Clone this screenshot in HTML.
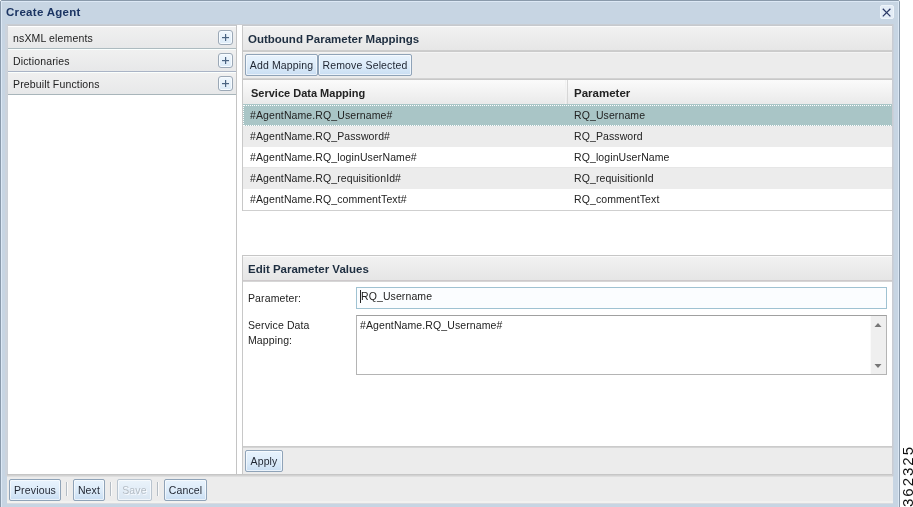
<!DOCTYPE html>
<html><head><meta charset="utf-8">
<style>
*{box-sizing:border-box}
html,body{margin:0;padding:0;width:913px;height:507px;overflow:hidden;background:#fff;font-family:"Liberation Sans",sans-serif;color:#222}
div,span,svg{position:absolute}
#root{left:0;top:0;width:913px;height:507px;will-change:transform}
.t{white-space:nowrap;line-height:12px}
.ln{height:1px}
#dlg{left:0;top:0;width:900px;height:530px;border:1px solid #8a9aab;background:#c7d5e3;border-radius:2px 2px 0 0}
#dlg:before{content:"";position:absolute;left:0;top:0;right:0;bottom:0;border:1px solid #dce8f5}
#title{left:6px;top:6px;font-size:11.5px;font-weight:bold;color:#1c3563;letter-spacing:0.3px}
#close{left:880px;top:5px;width:14px;height:14px;border:1px solid #eef4fa;border-radius:2px;background:#e3ecf6}
/* accordion */
.acc{left:8px;width:228px;height:22px;background:linear-gradient(#f0f0f0,#e7e8e9)}
.acct{left:13px;font-size:10.5px;color:#222;letter-spacing:0.15px}
.plus{left:218px;width:15px;height:15px;border:1px solid #9ba8b6;border-radius:3px;background:linear-gradient(#f0f7fd,#dcebf8);box-shadow:inset 0 0 0 1px #f6fbff}
.plus:before{content:"";position:absolute;left:3px;top:6px;width:7px;height:1px;background:#4a6482;box-shadow:0 1px 0 rgba(80,100,130,0.2)}
.plus:after{content:"";position:absolute;left:6px;top:3px;width:1px;height:7px;background:#4a6482;box-shadow:1px 0 0 rgba(80,100,130,0.2)}
.phdr{left:243px;width:649px;background:linear-gradient(#f1f1f1,#e6e6e6)}
.ptitle{font-size:11.5px;font-weight:bold;color:#1e2e40}
.btn{height:22px;border:1px solid #8fa3b8;border-radius:2px;background:linear-gradient(#e8f3fd 0%,#dcebf9 55%,#c9def3 100%);box-shadow:inset 0 0 0 1px rgba(255,255,255,0.6);font-size:10.5px;color:#1e2430;text-align:center;line-height:20px;white-space:nowrap;letter-spacing:0.15px}
.row{left:243px;width:649px;height:21px}
.rt{font-size:10.5px;color:#222;letter-spacing:0.1px}
.c1{left:250px}.c2{left:574px}
.sel{background:#a9c5c6}
.alt{background:#ececec}
.lbl{font-size:10.5px;color:#222;line-height:15px;white-space:nowrap;letter-spacing:0.12px}
.sep{top:482px;width:1px;height:14px;background:#b4bcc4;box-shadow:1px 0 0 #fafafa}
</style></head><body><div id="root">
<div id="dlg"></div>
<div id="title" class="t">Create Agent</div>
<div id="close"><svg width="12" height="13" viewBox="0 0 12 13" style="left:0;top:0"><path d="M1.8 2.8 L9.4 10.4 M9.4 2.8 L1.8 10.4" stroke="#2a3866" stroke-width="1.25"/></svg></div>

<!-- body white area -->
<div style="left:7px;top:24px;width:885px;height:452px;background:#fff"></div>
<div class="ln" style="left:7px;top:24px;width:885px;background:#c9cdd3"></div>
<div class="ln" style="left:7px;top:474px;width:886px;background:#c6c6c6"></div>
<div class="ln" style="left:7px;top:475px;width:886px;background:#d2d2d2"></div>

<div style="left:5px;top:24px;width:2px;height:452px;background:#ccd3dc"></div>
<div style="left:892px;top:24px;width:1px;height:452px;background:#c9ccd3"></div>
<div style="left:893px;top:24px;width:1px;height:452px;background:#c8d0da"></div>
<!-- left panel -->
<div style="left:7px;top:25px;width:1px;height:449px;background:#cdd1d7"></div>
<div style="left:236px;top:25px;width:1px;height:449px;background:#c4c4c4"></div>
<div class="ln" style="left:8px;top:25px;width:228px;background:#c6c9cd"></div>

<div class="acc" style="top:26px;border-top:1px solid #fff"></div>
<div class="ln" style="left:8px;top:48px;width:228px;background:#adbbc0"></div>
<div class="acc" style="top:49px;border-top:1px solid #fafffe"></div>
<div class="ln" style="left:8px;top:71px;width:228px;background:#aab4c6"></div>
<div class="acc" style="top:72px;border-top:1px solid #fbfffd"></div>
<div class="ln" style="left:8px;top:94px;width:228px;background:#a8b5ba"></div>
<span class="t acct" style="top:32px">nsXML elements</span>
<span class="t acct" style="top:55px">Dictionaries</span>
<span class="t acct" style="top:78px">Prebuilt Functions</span>
<div class="plus" style="top:30px"></div>
<div class="plus" style="top:53px"></div>
<div class="plus" style="top:76px"></div>

<!-- top right panel -->
<div style="left:242px;top:25px;width:1px;height:186px;background:#c8c8c8"></div>
<div class="ln" style="left:243px;top:25px;width:649px;background:#c6c9cd"></div>
<div class="phdr" style="top:26px;height:25px;border-top:1px solid #fbfbfb"></div>
<div class="ln" style="left:243px;top:50px;width:649px;background:#cdcdcd"></div>
<div class="ln" style="left:243px;top:51px;width:649px;background:#cbcbcb"></div>
<span class="t ptitle" style="left:248px;top:33px">Outbound Parameter Mappings</span>
<div style="left:243px;top:52px;width:649px;height:27px;background:#ececec;border-top:1px solid #f4f4f4"></div>
<div class="ln" style="left:243px;top:78px;width:649px;background:#d2d2d2"></div><div class="ln" style="left:243px;top:79px;width:649px;background:#c8c8c8"></div>
<div class="btn" style="left:245px;top:54px;width:73px">Add Mapping</div>
<div class="btn" style="left:318px;top:54px;width:94px">Remove Selected</div>

<div style="left:243px;top:80px;width:649px;height:25px;background:linear-gradient(#fbfbfb,#e9e9e9)"></div>
<div style="left:567px;top:80px;width:1px;height:24px;background:#d6d6d6"></div>
<div style="left:565px;top:80px;width:1px;height:24px;background:#f2f2f2"></div>
<span class="t" style="left:251px;top:87px;font-size:11px;font-weight:bold;color:#222">Service Data Mapping</span>
<span class="t" style="left:574px;top:87px;font-size:11.5px;font-weight:bold;color:#222">Parameter</span>

<div class="row sel" style="top:104px;height:22px"></div>
<div style="left:243px;top:105px;width:649px;height:21px;overflow:hidden"><div style="left:0;top:0;width:660px;height:21px;border:1px dotted #fff"></div></div>
<div class="row alt" style="top:126px"></div>
<div class="row" style="top:147px"></div>
<div class="ln" style="left:243px;top:167px;width:649px;background:#e6e6e6"></div>
<div class="row alt" style="top:168px"></div>
<div class="row" style="top:189px"></div>
<div class="ln" style="left:243px;top:210px;width:649px;background:#cfcfcf"></div>
<span class="t rt c1" style="top:109px">#AgentName.RQ_Username#</span><span class="t rt c2" style="top:109px">RQ_Username</span>
<span class="t rt c1" style="top:130px">#AgentName.RQ_Password#</span><span class="t rt c2" style="top:130px">RQ_Password</span>
<span class="t rt c1" style="top:151px">#AgentName.RQ_loginUserName#</span><span class="t rt c2" style="top:151px">RQ_loginUserName</span>
<span class="t rt c1" style="top:172px">#AgentName.RQ_requisitionId#</span><span class="t rt c2" style="top:172px">RQ_requisitionId</span>
<span class="t rt c1" style="top:193px">#AgentName.RQ_commentText#</span><span class="t rt c2" style="top:193px">RQ_commentText</span>

<!-- bottom right panel -->
<div style="left:242px;top:255px;width:1px;height:219px;background:#c8c8c8"></div>
<div class="ln" style="left:243px;top:255px;width:649px;background:#c6c6c6"></div>
<div class="phdr" style="top:256px;height:24px;border-top:1px solid #fbfbfb"></div>
<div class="ln" style="left:243px;top:280px;width:649px;background:#cdc9cb"></div>
<div class="ln" style="left:243px;top:281px;width:649px;background:#d6d6d6"></div>
<span class="t ptitle" style="left:248px;top:263px">Edit Parameter Values</span>

<div class="lbl" style="left:248px;top:291px">Parameter:</div>
<div style="left:356px;top:287px;width:531px;height:22px;background:#fbfdff;border:1px solid #9fc2d2"></div>
<div style="left:360px;top:290px;width:1px;height:13px;background:#222"></div>
<span class="t rt" style="left:361px;top:290px">RQ_Username</span>
<div class="lbl" style="left:248px;top:318px">Service Data<br>Mapping:</div>
<div style="left:356px;top:315px;width:531px;height:60px;background:#fff;border:1px solid #b4b4b4;border-top-color:#a0a0a0"></div>
<span class="t rt" style="left:360px;top:319px">#AgentName.RQ_Username#</span>
<div style="left:870px;top:316px;width:16px;height:58px;background:#efefef;border-left:1px solid #fafafa"></div>
<svg width="16" height="58" style="left:870px;top:316px"><path d="M4.5 11 L8 7 L11.5 11 Z" fill="#767676"/><path d="M4.5 48 L8 52 L11.5 48 Z" fill="#767676"/></svg>

<div class="ln" style="left:243px;top:446px;width:649px;background:#cbcbcb"></div>
<div style="left:243px;top:447px;width:649px;height:27px;background:#ececec;border-top:1px solid #d4d4d4"></div>
<div class="btn" style="left:245px;top:450px;width:38px">Apply</div>

<!-- footer -->
<div style="left:7px;top:476px;width:886px;height:28px;background:#ececec;border-top:1px solid #dedede;border-bottom:1px solid #d9dbe0;box-shadow:inset 0 -2px 0 #f2f2f0"></div>
<div class="btn" style="left:9px;top:479px;width:52px">Previous</div>
<div class="sep" style="left:66px"></div>
<div class="btn" style="left:73px;top:479px;width:32px">Next</div>
<div class="sep" style="left:110px"></div>
<div class="btn" style="left:117px;top:479px;width:35px;color:#b4bcc4;border-color:#b9c4cf;background:linear-gradient(#eaf3fb,#dae6f2);text-shadow:1px 1px 0 #f8fbff">Save</div>
<div class="sep" style="left:157px"></div>
<div class="btn" style="left:164px;top:479px;width:43px">Cancel</div>

<span class="t" style="left:901px;top:507px;transform-origin:0 0;transform:rotate(-90deg);font-size:15px;letter-spacing:2px;line-height:14px;color:#111">362325</span>
</div></body></html>
